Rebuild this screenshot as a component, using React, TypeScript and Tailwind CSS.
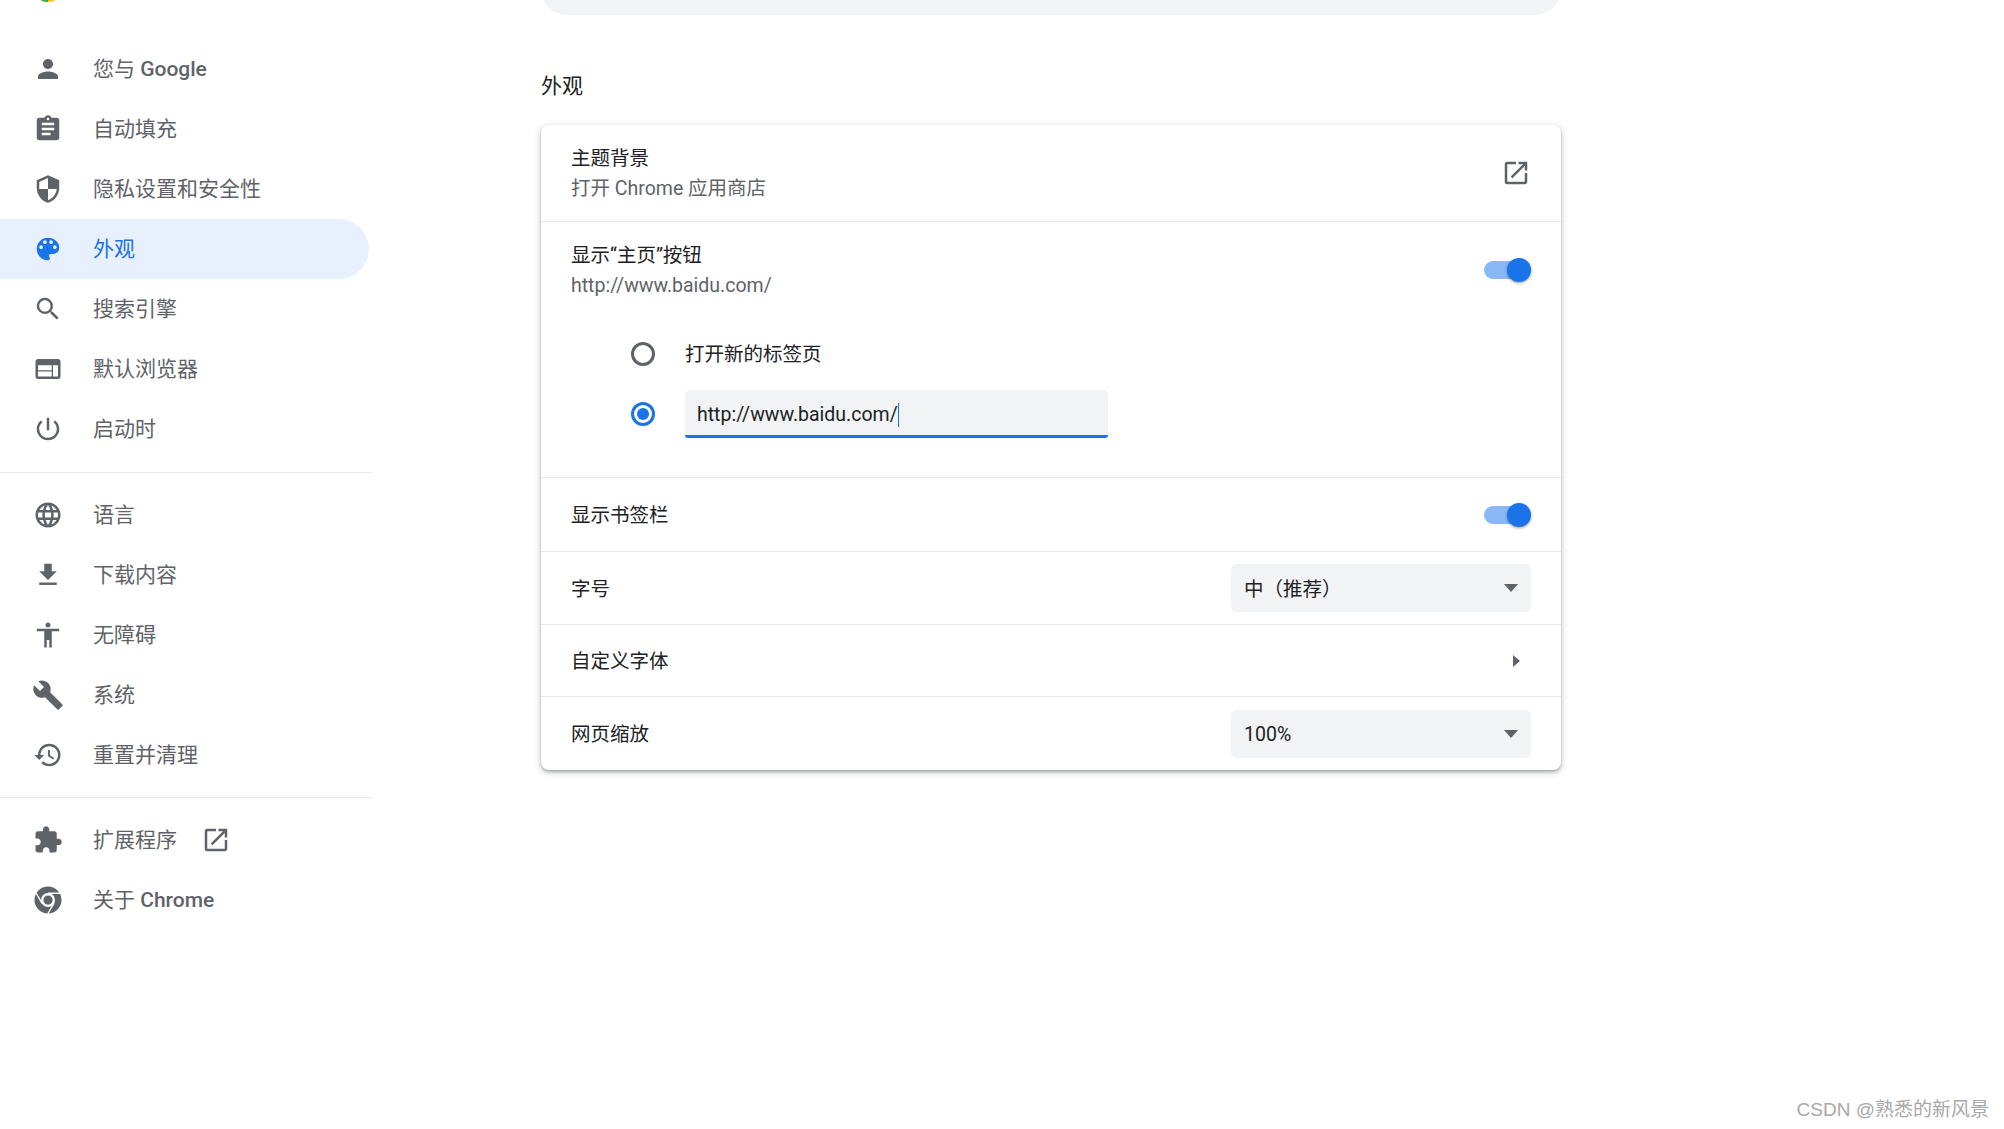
import type { ReactNode } from "react";

const font = { fontFamily: "Roboto, 'Noto Sans CJK SC', sans-serif" };

const paths = {
  person: "M12 12c2.21 0 4-1.79 4-4s-1.79-4-4-4-4 1.79-4 4 1.79 4 4 4zm0 2c-2.67 0-8 1.34-8 4v2h16v-2c0-2.66-5.33-4-8-4z",
  assignment: "M19 3h-4.18C14.4 1.84 13.3 1 12 1c-1.3 0-2.4.84-2.82 2H5c-1.1 0-2 .9-2 2v14c0 1.1.9 2 2 2h14c1.1 0 2-.9 2-2V5c0-1.1-.9-2-2-2zm-7 0c.55 0 1 .45 1 1s-.45 1-1 1-1-.45-1-1 .45-1 1-1zm2 14H7v-2h7v2zm3-4H7v-2h10v2zm0-4H7V7h10v2z",
  security: "M12 1L3 5v6c0 5.55 3.84 10.74 9 12 5.16-1.26 9-6.45 9-12V5l-9-4zm0 10.99h7c-.53 4.12-3.28 7.79-7 8.94V12H5V6.3l7-3.11v8.8z",
  palette: "M12 3a9 9 0 0 0 0 18c.83 0 1.5-.67 1.5-1.5 0-.39-.15-.74-.39-1.01-.23-.26-.38-.61-.38-.99 0-.83.67-1.5 1.5-1.5H16c2.76 0 5-2.24 5-5 0-4.42-4.03-8-9-8zm-5.5 9c-.83 0-1.5-.67-1.5-1.5S5.67 9 6.5 9 8 9.67 8 10.5 7.33 12 6.5 12zm3-4C8.67 8 8 7.33 8 6.5S8.67 5 9.5 5s1.5.67 1.5 1.5S10.33 8 9.5 8zm5 0c-.83 0-1.5-.67-1.5-1.5S13.67 5 14.5 5s1.5.67 1.5 1.5S15.33 8 14.5 8zm3 4c-.83 0-1.5-.67-1.5-1.5S16.67 9 17.5 9s1.5.67 1.5 1.5-.67 1.5-1.5 1.5z",
  search: "M15.5 14h-.79l-.28-.27A6.471 6.471 0 0 0 16 9.5 6.5 6.5 0 1 0 9.5 16c1.61 0 3.09-.59 4.23-1.57l.27.28v.79l5 4.99L20.49 19l-4.99-5zm-6 0C7.01 14 5 11.99 5 9.5S7.01 5 9.5 5 14 7.01 14 9.5 11.99 14 9.5 14z",
  web: "M20 4H4c-1.1 0-1.99.9-1.99 2L2 18c0 1.1.9 2 2 2h16c1.1 0 2-.9 2-2V6c0-1.1-.9-2-2-2zm-5 14H4v-4h11v4zm0-5H4V9h11v4zm5 5h-4V9h4v9z",
  power: "M13 3h-2v10h2V3zm4.83 2.17l-1.42 1.42A6.92 6.92 0 0 1 19 12c0 3.87-3.13 7-7 7A6.995 6.995 0 0 1 7.58 6.58L6.17 5.17A8.932 8.932 0 0 0 3 12a9 9 0 0 0 18 0c0-2.74-1.23-5.18-3.17-6.83z",
  language: "M11.99 2C6.47 2 2 6.48 2 12s4.47 10 9.99 10C17.52 22 22 17.52 22 12S17.52 2 11.99 2zm6.93 6h-2.95a15.65 15.65 0 0 0-1.38-3.56A8.03 8.03 0 0 1 18.92 8zM12 4.04c.83 1.2 1.48 2.53 1.91 3.96h-3.82c.43-1.43 1.08-2.76 1.91-3.96zM4.26 14C4.1 13.36 4 12.69 4 12s.1-1.36.26-2h3.38c-.08.66-.14 1.32-.14 2 0 .68.06 1.34.14 2H4.26zm.82 2h2.95c.32 1.25.78 2.45 1.38 3.56A7.987 7.987 0 0 1 5.08 16zm2.95-8H5.08a7.987 7.987 0 0 1 4.33-3.56A15.65 15.65 0 0 0 8.03 8zM12 19.96c-.83-1.2-1.48-2.53-1.91-3.96h3.82c-.43 1.43-1.08 2.76-1.91 3.96zM14.34 14H9.66c-.09-.66-.16-1.32-.16-2 0-.68.07-1.35.16-2h4.68c.09.65.16 1.32.16 2 0 .68-.07 1.34-.16 2zm.25 5.56c.6-1.11 1.06-2.31 1.38-3.56h2.95a8.03 8.03 0 0 1-4.33 3.56zM16.36 14c.08-.66.14-1.32.14-2 0-.68-.06-1.34-.14-2h3.38c.16.64.26 1.31.26 2s-.1 1.36-.26 2h-3.38z",
  download: "M19 9h-4V3H9v6H5l7 7 7-7zM5 18v2h14v-2H5z",
  accessibility: "M12 2c1.1 0 2 .9 2 2s-.9 2-2 2-2-.9-2-2 .9-2 2-2zm9 7h-6v13h-2v-6h-2v6H9V9H3V7h18v2z",
  build: "M22.7 19l-9.1-9.1c.9-2.3.4-5-1.5-6.9-2-2-5-2.4-7.4-1.3L9 6 6 9 1.6 4.7C.4 7.1.9 10.1 2.9 12.1c1.9 1.9 4.6 2.4 6.9 1.5l9.1 9.1c.4.4 1 .4 1.4 0l2.3-2.3c.5-.4.5-1.1.1-1.4z",
  restore: "M13 3a9 9 0 0 0-9 9H1l3.89 3.89.07.14L9 12H6c0-3.87 3.13-7 7-7s7 3.13 7 7-3.13 7-7 7c-1.93 0-3.68-.79-4.94-2.06l-1.42 1.42A8.954 8.954 0 0 0 13 21a9 9 0 0 0 0-18zm-1 5v5l4.28 2.54.72-1.21-3.5-2.08V8H12z",
  extension: "M20.5 11H19V7c0-1.1-.9-2-2-2h-4V3.5C13 2.12 11.88 1 10.5 1S8 2.12 8 3.5V5H4c-1.1 0-1.99.9-1.99 2v3.8H3.5c1.49 0 2.7 1.21 2.7 2.7s-1.21 2.7-2.7 2.7H2V20c0 1.1.9 2 2 2h3.8v-1.5c0-1.49 1.21-2.7 2.7-2.7 1.49 0 2.7 1.21 2.7 2.7V22H17c1.1 0 2-.9 2-2v-4h1.5c1.38 0 2.5-1.12 2.5-2.5S21.88 11 20.5 11z",
  open: "M19 19H5V5h7V3H5a2 2 0 0 0-2 2v14a2 2 0 0 0 2 2h14c1.1 0 2-.9 2-2v-7h-2v7zM14 3v2h3.59l-9.83 9.83 1.41 1.41L19 6.41V10h2V3h-7z",
};

type IconName = keyof typeof paths;

const Icon = ({ name, className = "" }: { name: IconName; className?: string }) => (
  <svg viewBox="0 0 24 24" className={`w-[30px] h-[30px] shrink-0 fill-current ${className}`}>
    <path d={paths[name]} />
  </svg>
);

const ChromeIcon = () => (
  <svg viewBox="0 0 24 24" className="w-[30px] h-[30px] shrink-0">
    <circle cx="12" cy="12" r="10.8" fill="#5f6368" />
    <circle cx="12" cy="12" r="5.6" fill="#fff" />
    <circle cx="12" cy="12" r="3.7" fill="#5f6368" />
    <path d="M12 6.6H22M7.3 14.7L2.3 6.2M16.7 14.7L11.8 23" stroke="#fff" strokeWidth="1.1" fill="none" />
  </svg>
);

const NavItem = ({
  icon,
  label,
  active,
  children,
}: {
  icon: ReactNode;
  label: ReactNode;
  active?: boolean;
  children?: ReactNode;
}) => (
  <div
    className={`flex items-center h-[60px] w-[369px] pl-[33px] gap-[30px] text-[21px] ${
      active ? "bg-[#e8f0fe] rounded-r-full text-[#1a73e8]" : "text-[#5f6368]"
    }`}
  >
    {icon}
    <span className="pt-[2px]">{label}</span>
    {children}
  </div>
);

const Rule = ({ className = "" }: { className?: string }) => (
  <div className={`h-px bg-[#e8e9ea] ${className}`} />
);

const Toggle = () => (
  <div className="relative w-[47px] h-[18px] rounded-full bg-[#8ab8f6]">
    <div className="absolute right-0 -top-[3px] w-[24px] h-[24px] rounded-full bg-[#1a73e8] shadow-[0_1px_3px_rgba(0,0,0,0.4)]" />
  </div>
);

const Select = ({ value }: { value: string }) => (
  <div className="flex items-center justify-between w-[300px] h-[48px] rounded-[5px] bg-[#f1f3f4] pl-[13px] pr-[13px] text-[#202124]">
    <span className="pt-[3px]">{value}</span>
    <div className="w-0 h-0 border-x-[7px] border-x-transparent border-t-[8px] border-t-[#5f6368]" />
  </div>
);

const Row = ({ h, label, children }: { h: string; label: string; children: ReactNode }) => (
  <div className={`flex items-center justify-between border-t border-[#e9e9ea] px-[30px] ${h}`}>
    <span className="pt-[3px]">{label}</span>
    {children}
  </div>
);

export default function App() {
  return (
    <div className="relative flex w-[2004px] h-[1129px] overflow-hidden bg-white" style={font}>
      <aside className="w-[372px] shrink-0">
        <div className="flex h-[39px] items-start">
          <svg viewBox="0 0 30 30" className="w-[30px] h-[30px] ml-[33px] -mt-[28px] shrink-0">
            <circle cx="15" cy="15" r="15" fill="#fbbc04" />
            <path d="M15 30A15 15 0 0 1 0 15H15Z" fill="#34a853" />
          </svg>
          <span className="ml-[36px] -mt-[31px] text-[32px] leading-[32px] text-[#202124]">设置</span>
        </div>
        <NavItem icon={<Icon name="person" />} label={<>您与 <span className="font-medium">Google</span></>} />
        <NavItem icon={<Icon name="assignment" />} label="自动填充" />
        <NavItem icon={<Icon name="security" />} label="隐私设置和安全性" />
        <NavItem icon={<Icon name="palette" />} label="外观" active />
        <NavItem icon={<Icon name="search" />} label="搜索引擎" />
        <NavItem icon={<Icon name="web" />} label="默认浏览器" />
        <NavItem icon={<Icon name="power" />} label="启动时" />
        <Rule className="mt-[13px] mb-[12px]" />
        <NavItem icon={<Icon name="language" />} label="语言" />
        <NavItem icon={<Icon name="download" />} label="下载内容" />
        <NavItem icon={<Icon name="accessibility" />} label="无障碍" />
        <NavItem icon={<Icon name="build" className="w-[32px] h-[32px] -mx-px" />} label="系统" />
        <NavItem icon={<Icon name="restore" />} label="重置并清理" />
        <Rule className="mt-[12px] mb-[12px]" />
        <NavItem icon={<Icon name="extension" />} label="扩展程序">
          <Icon name="open" className="-ml-[6px]" />
        </NavItem>
        <NavItem icon={<ChromeIcon />} label={<>关于 <span className="font-medium">Chrome</span></>} />
      </aside>

      <main className="ml-[169px] w-[1020px] text-[19.5px] text-[#202124]">
        <div className="h-[52px] -mt-[37px] rounded-[26px] bg-[#f1f3f4]" />
        <h2 className="h-[110px] pt-[55px] text-[21px] leading-[32px]">外观</h2>
        <section className="rounded-[8px] bg-white shadow-[0_2px_3px_rgba(60,64,67,0.35),0_2px_6px_2px_rgba(60,64,67,0.15)]">
          <div className="flex items-center justify-between h-[96px] px-[30px]">
            <div className="pt-[1px] leading-[30px]">
              <div>主题背景</div>
              <div className="text-[#5f6368]">打开 Chrome 应用商店</div>
            </div>
            <Icon name="open" className="text-[#5f6368]" />
          </div>

          <div className="h-[256px] border-t border-[#e9e9ea] px-[30px]">
            <div className="flex items-center justify-between h-[96px] leading-[30px]">
              <div className="pt-[1px]">
                <div>显示“主页”按钮</div>
                <div className="text-[#5f6368]">http://www.baidu.com/</div>
              </div>
              <Toggle />
            </div>
            <div className="flex items-center h-[60px] ml-[60px] gap-[30px] mt-[6px]">
              <div className="w-[24px] h-[24px] rounded-full border-[3px] border-[#5f6368]" />
              <span className="pt-[1px]">打开新的标签页</span>
            </div>
            <div className="flex items-center h-[60px] ml-[60px] gap-[30px]">
              <div className="flex items-center justify-center w-[24px] h-[24px] rounded-full border-[3px] border-[#1a73e8]">
                <div className="w-[12px] h-[12px] rounded-full bg-[#1a73e8]" />
              </div>
              <div className="flex items-center w-[423px] h-[48px] pl-[12px] pt-[5px] rounded-t-[5px] rounded-b-[3px] bg-[#f1f3f4] border-b-[3px] border-[#1a73e8]">
                http://www.baidu.com/
                <span className="w-px h-[24px] bg-[#1a73e8]" />
              </div>
            </div>
          </div>

          <Row h="h-[74px]" label="显示书签栏">
            <Toggle />
          </Row>
          <Row h="h-[73px]" label="字号">
            <Select value="中（推荐）" />
          </Row>
          <Row h="h-[72px]" label="自定义字体">
            <div className="mr-[11px] w-0 h-0 border-y-[6px] border-y-transparent border-l-[7px] border-l-[#5f6368]" />
          </Row>
          <Row h="h-[74px]" label="网页缩放">
            <Select value="100%" />
          </Row>
        </section>
      </main>

      <div
        className="absolute right-[15px] bottom-[5px] text-[19px] text-[#a8a8a8]"
        style={{ fontFamily: "'Liberation Sans', 'Noto Sans CJK SC', sans-serif" }}
      >
        CSDN @熟悉的新风景
      </div>
    </div>
  );
}
